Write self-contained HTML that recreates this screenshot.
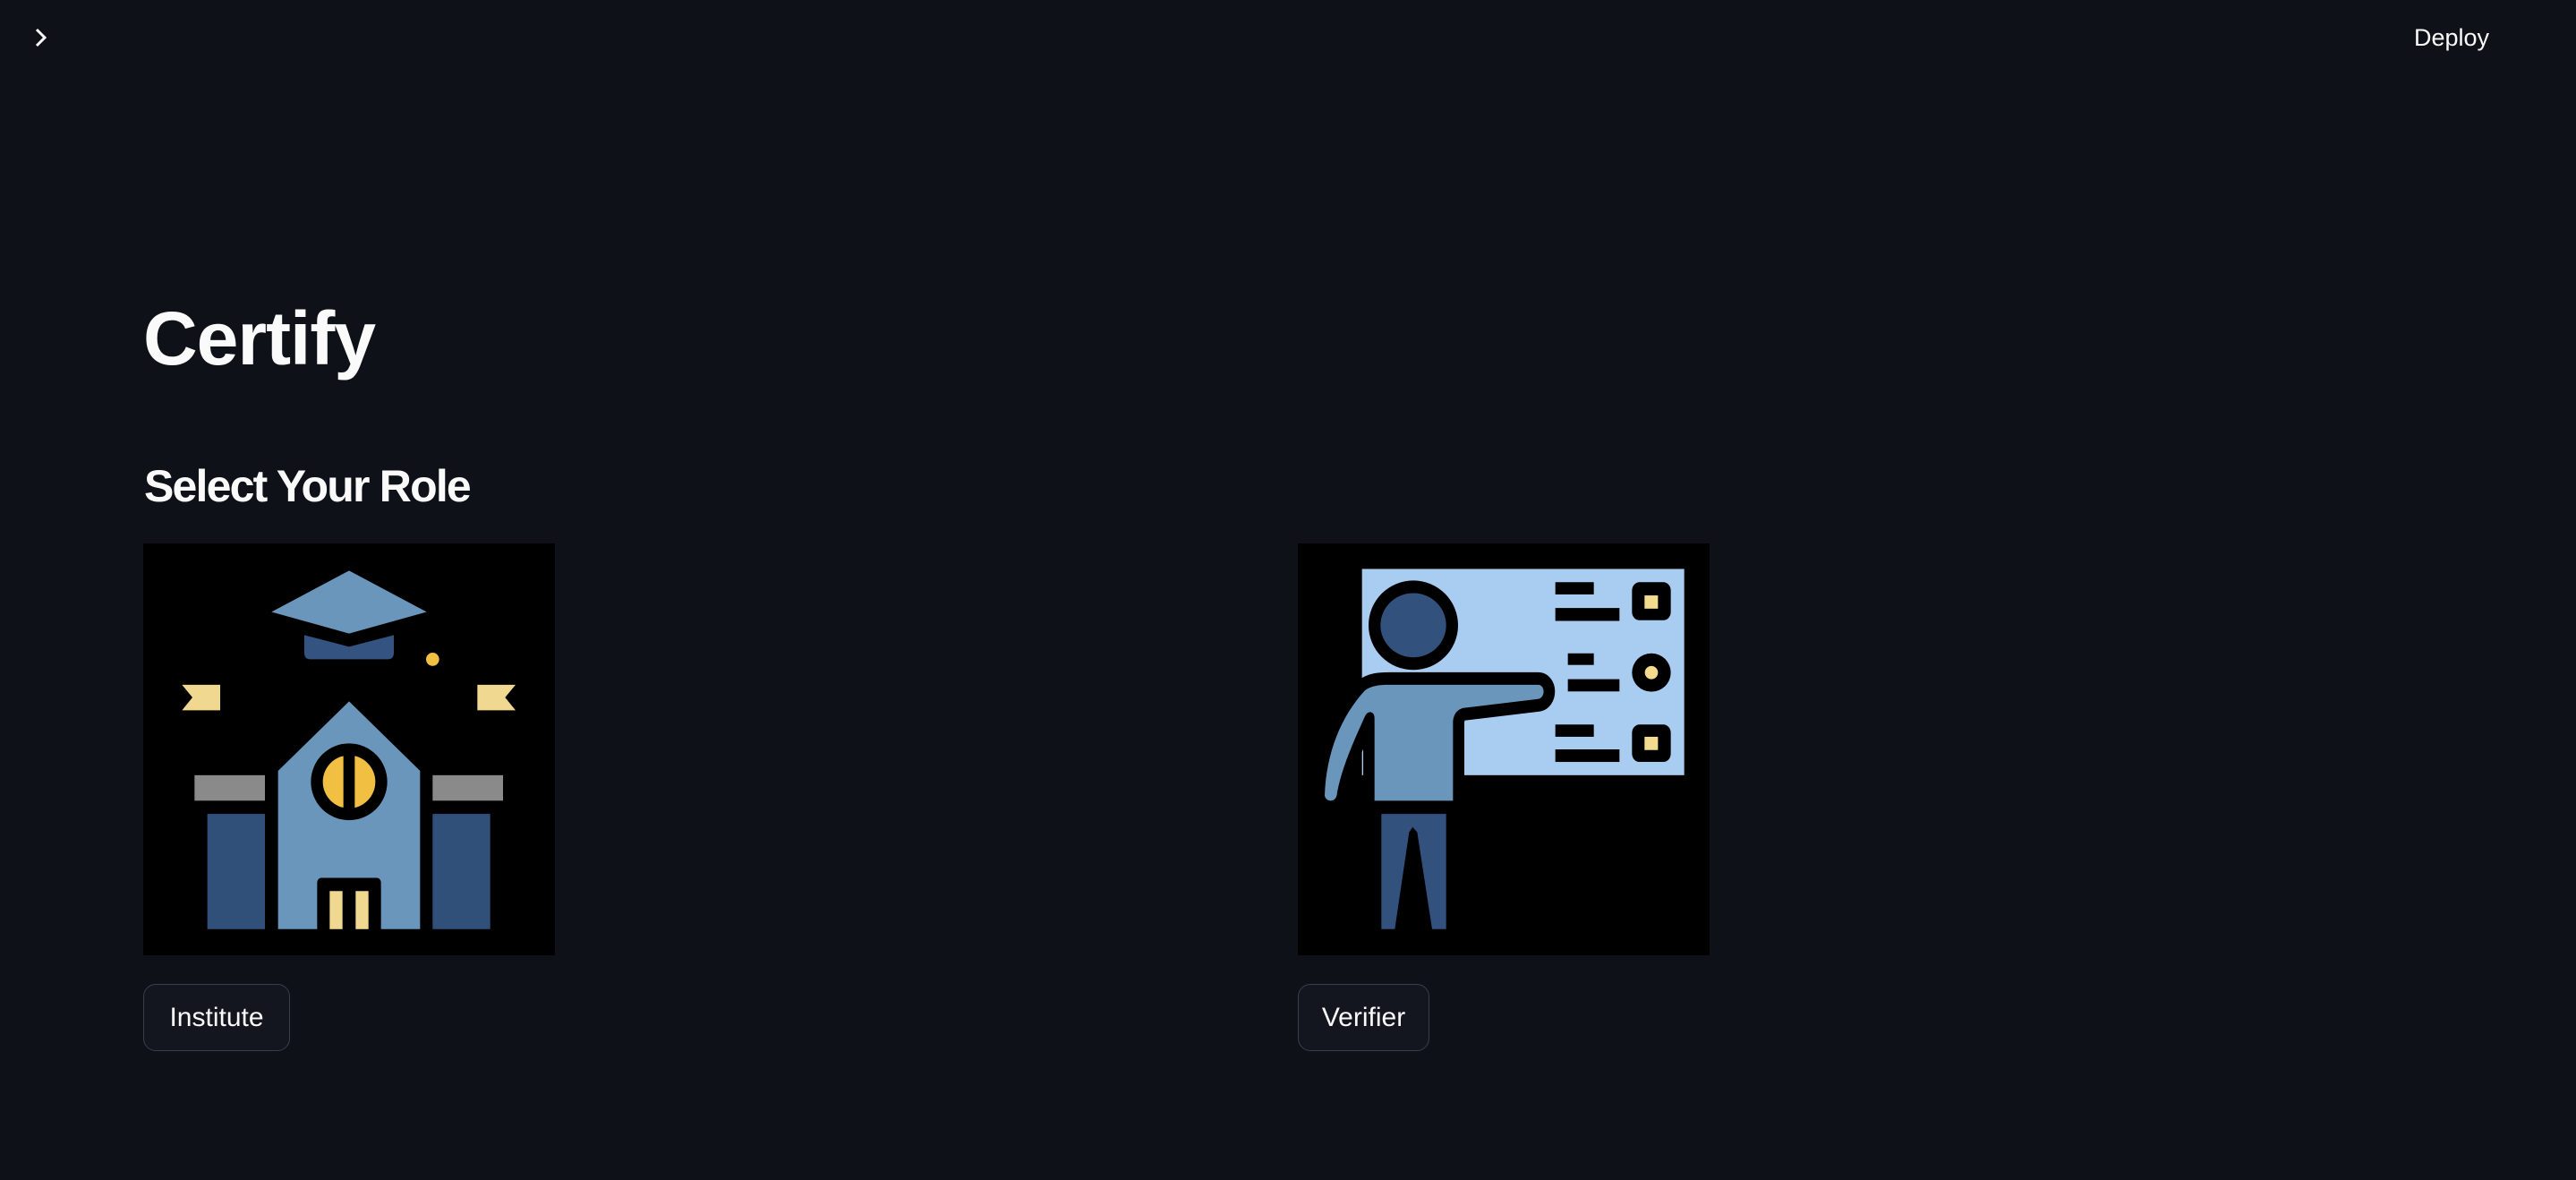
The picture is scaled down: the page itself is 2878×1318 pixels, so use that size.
<!DOCTYPE html>
<html><head><meta charset="utf-8"><style>
html,body{margin:0;padding:0;background:#0e1117;width:2878px;height:1318px;overflow:hidden;font-family:"Liberation Sans",sans-serif;color:#fafafa}
.abs{position:absolute}
h1{position:absolute;left:160px;top:336px;margin:0;font-size:84px;font-weight:700;line-height:1;letter-spacing:-1px}
h2{position:absolute;left:161px;top:518px;margin:0;font-size:50px;font-weight:700;line-height:1;letter-spacing:-1.8px}
.btn{position:absolute;top:1099px;height:75px;border:1.5px solid #3b3e48;border-radius:14px;background:#13161e;font-size:30px;display:flex;align-items:center;justify-content:center;box-sizing:border-box}
</style></head><body>
<svg class="abs" style="left:36px;top:30px" width="20" height="24" viewBox="0 0 20 24"><path d="M5 3 L14 12 L5 21" fill="none" stroke="#fafafa" stroke-width="3"/></svg>
<div class="abs" style="left:2697px;top:27px;font-size:27px">Deploy</div>
<h1>Certify</h1>
<h2>Select Your Role</h2>

<svg class="abs" style="left:160px;top:607px" width="460" height="460" viewBox="0 18 1380 1244" preserveAspectRatio="none">
<rect x="0" y="18" width="1380" height="1244" fill="#000"/>
<polygon points="430,225 690,100 950,225 690,290" fill="#6a96bb"/>
<path d="M540,295 L690,330 L840,295 L840,348 Q840,368 820,368 L560,368 Q540,368 540,348Z" fill="#345380"/>
<ellipse cx="970" cy="368" rx="22" ry="20" fill="#f1bf42"/>
<polygon points="130,445 258,445 258,522 130,522 165,483" fill="#f0d890"/>
<polygon points="1120,445 1248,445 1213,483 1248,522 1120,522" fill="#f0d890"/>
<rect x="172" y="718" width="236" height="77" fill="#8a8a8a"/>
<rect x="970" y="718" width="236" height="77" fill="#8a8a8a"/>
<rect x="215" y="835" width="193" height="348" fill="#30507a"/>
<rect x="970" y="835" width="193" height="348" fill="#30507a"/>
<polygon points="452,705 690,495 928,705 928,1183 452,1183" fill="#6a96bb"/>
<ellipse cx="690" cy="738" rx="128" ry="116" fill="#000"/>
<ellipse cx="690" cy="738" rx="88" ry="80" fill="#f1bf42"/>
<rect x="671" y="650" width="38" height="180" fill="#000"/>
<rect x="583" y="1028" width="214" height="170" rx="14" fill="#000"/>
<rect x="625" y="1068" width="43" height="115" fill="#f0d890"/>
<rect x="712" y="1068" width="43" height="115" fill="#f0d890"/>
</svg>

<svg class="abs" style="left:1450px;top:607px" width="460" height="460" viewBox="15 18 1380 1244" preserveAspectRatio="none">
<rect x="15" y="18" width="1380" height="1244" fill="#000"/>
<rect x="230" y="95" width="1080" height="623" fill="#a9cdf0"/>
<rect x="878" y="135" width="129" height="37" fill="#000"/>
<rect x="878" y="213" width="215" height="39" fill="#000"/>
<rect x="1135" y="135" width="130" height="115" rx="25" fill="#000"/>
<rect x="1177" y="175" width="45" height="40" fill="#f3dc8e"/>
<rect x="920" y="350" width="87" height="35" fill="#000"/>
<rect x="920" y="428" width="173" height="37" fill="#000"/>
<ellipse cx="1200" cy="408" rx="65" ry="58" fill="#000"/>
<ellipse cx="1200" cy="408" rx="22" ry="20" fill="#f3dc8e"/>
<rect x="878" y="565" width="129" height="37" fill="#000"/>
<rect x="878" y="640" width="215" height="38" fill="#000"/>
<rect x="1135" y="565" width="130" height="113" rx="25" fill="#000"/>
<rect x="1177" y="602" width="45" height="40" fill="#f3dc8e"/>
<ellipse cx="402" cy="265" rx="150" ry="135" fill="#000"/>
<ellipse cx="402" cy="265" rx="110" ry="97" fill="#33517d"/>
<path d="M105,780 C110,650 160,540 240,462 C262,447 290,445 320,445 L820,445 C845,445 845,485 820,488 L570,515 C545,520 535,540 535,560 L535,795 L272,795 L272,545 C272,525 250,520 240,540 C200,620 160,700 145,780 C140,800 110,800 105,780 Z" fill="#000" stroke="#000" stroke-width="76" stroke-linejoin="round"/>
<path d="M105,780 C110,650 160,540 240,462 C262,447 290,445 320,445 L820,445 C845,445 845,485 820,488 L570,515 C545,520 535,540 535,560 L535,795 L272,795 L272,545 C272,525 250,520 240,540 C200,620 160,700 145,780 C140,800 110,800 105,780 Z" fill="#6a96bb"/>
<polygon points="295,835 512,835 512,1183 465,1183 415,890 400,875 388,890 340,1183 295,1183" fill="#33517d"/>
</svg>

<div class="btn" style="left:160px;width:164px">Institute</div>
<div class="btn" style="left:1450px;width:147px">Verifier</div>
</body></html>
